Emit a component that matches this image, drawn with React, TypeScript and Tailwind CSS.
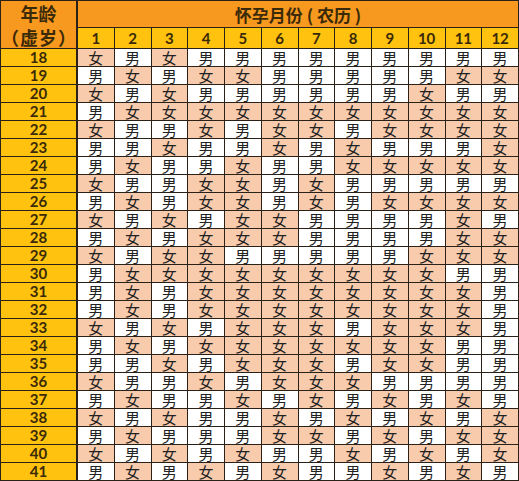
import { Fragment } from 'react';

const months = ['1', '2', '3', '4', '5', '6', '7', '8', '9', '10', '11', '12'];

// 女 = F, 男 = M
const chart: [number, string][] = [
  [18, 'FMFMMMMMMMMM'],
  [19, 'MFMFFMMMMMFF'],
  [20, 'FMFMMMMMMFMM'],
  [21, 'MFFFFFFFFFFF'],
  [22, 'FMMFMFFMFFFF'],
  [23, 'MMFMMFMFMMMF'],
  [24, 'MFMMFMMFFFFF'],
  [25, 'FMMFFMFMMMMM'],
  [26, 'MFMFFMFMFFFF'],
  [27, 'FMFMFFMMMMFM'],
  [28, 'MFMFFFMMMMFF'],
  [29, 'FMFFMMMMMFFF'],
  [30, 'MFFFFFFFFFMM'],
  [31, 'MFMFFFFFFFFM'],
  [32, 'MFMFFFFFFFFM'],
  [33, 'FMFMFFFMFFFM'],
  [34, 'MFMFFFFFFFMM'],
  [35, 'MMFMFFFMFFMM'],
  [36, 'FMMFMFFFMMMM'],
  [37, 'MFMMFMFMFMFM'],
  [38, 'FMFMMFMFMFMF'],
  [39, 'MFMMMFFMFMFF'],
  [40, 'FMFMFMMFMFMF'],
  [41, 'MFMFMFMMFMFM'],
];

const cjk = '"Noto Sans CJK SC", "Noto Sans", sans-serif';
const num = 'Lato, "Noto Sans CJK SC", sans-serif';

export default function App() {
  return (
    <div className="w-[519px] h-[481px] bg-white">
      <div
        className="grid grid-cols-[76px_repeat(12,minmax(0,1fr))] grid-rows-[26px_20px_repeat(24,17px)] gap-px bg-[#2a2118] p-px w-[519px] h-[481px] leading-none"
        style={{ fontFamily: cjk }}
      >
        <div className="row-span-2 mr-px bg-[#f7981f] flex flex-col items-center justify-center gap-[6px] text-[#3b2a08] font-bold text-[18px]">
          <span>年龄</span>
          <span className="tracking-[1px]">（虚岁）</span>
        </div>
        <div className="col-span-12 bg-[#f7981f] flex items-center justify-center text-[#3b2a08] font-bold text-[17px] whitespace-pre">
          怀孕月份 ( 农历 )
        </div>
        {months.map((m) => (
          <div
            key={m}
            className="bg-[#ffc20e] flex items-center justify-center text-[#3b2a08] font-bold text-[15px]"
            style={{ fontFamily: num }}
          >
            {m}
          </div>
        ))}
        {chart.map(([age, row]) => (
          <Fragment key={age}>
            <div
              className="mr-px bg-[#ffc20e] flex items-center justify-center text-[#3b2a08] font-bold text-[15px]"
              style={{ fontFamily: num }}
            >
              {age}
            </div>
            {row.split('').map((g, i) => (
              <div
                key={i}
                className={`flex items-center justify-center text-[15px] text-[#222] ${
                  g === 'F' ? 'bg-[#f8cbad]' : 'bg-white'
                }`}
              >
                {g === 'F' ? '女' : '男'}
              </div>
            ))}
          </Fragment>
        ))}
      </div>
    </div>
  );
}
